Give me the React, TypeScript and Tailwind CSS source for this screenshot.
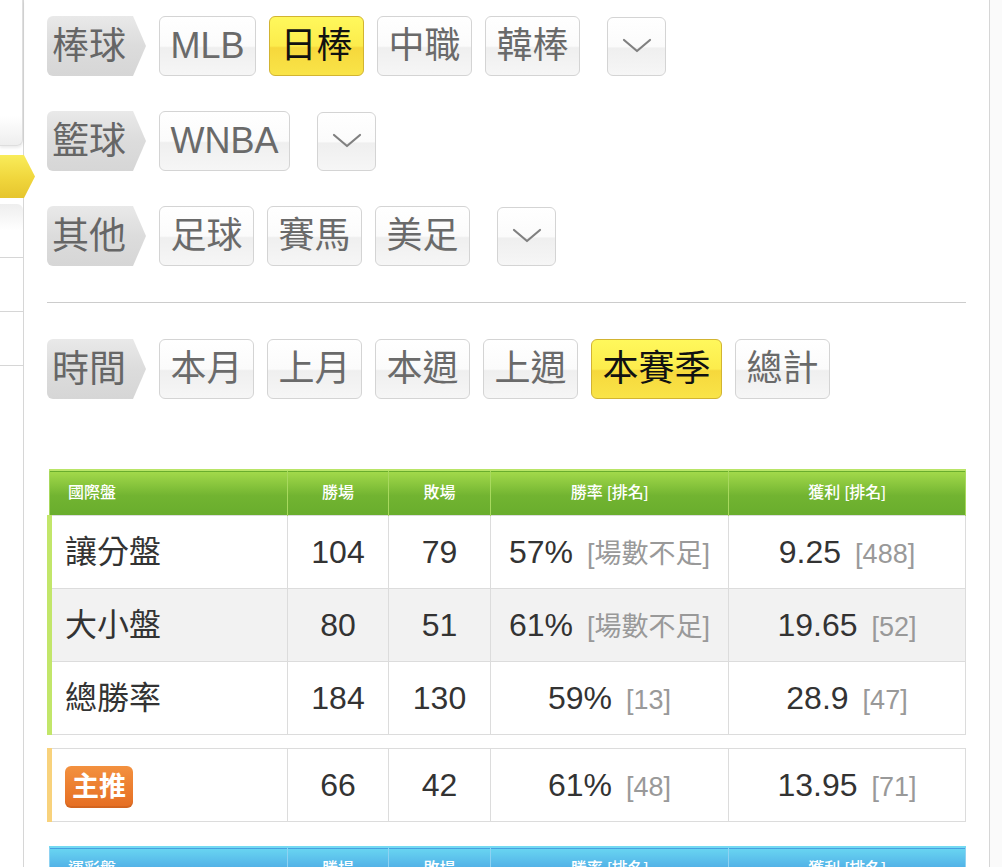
import React from "react";

const FONT = { fontFamily: '"Liberation Sans", "Noto Sans CJK TC", sans-serif' };

function Tag({ label }: { label: string }) {
  return (
    <div className="flex h-[60px] w-[99px] shrink-0 items-center rounded-l-md bg-[linear-gradient(to_bottom,#e9e9e9,#dcdcdc_50%,#d6d6d6)] pl-[5px] text-[37px] leading-none text-[#666] [clip-path:polygon(0_0,calc(100%_-_13px)_0,100%_50%,calc(100%_-_13px)_100%,0_100%)]">
      {label}
    </div>
  );
}

function Btn({ label, active }: { label: string; active?: boolean }) {
  return (
    <button
      className={`flex h-[60px] shrink-0 items-center rounded-md border px-[10.5px] text-[36px] leading-none ${
        active
          ? "border-[#d2b431] bg-[linear-gradient(to_bottom,#fff85c_0%,#fcec4c_50%,#f6d83c_53%,#f9e448_100%)] text-[#111]"
          : "border-[#d4d4d4] bg-[linear-gradient(to_bottom,#ffffff_0%,#fbfbfb_50%,#efefef_53%,#f6f6f6_100%)] text-[#6a6a6a]"
      }`}
    >
      {label}
    </button>
  );
}

function Drop() {
  return (
    <button className="ml-[14px] flex h-[59px] w-[59px] shrink-0 items-center justify-center rounded-md border border-[#d4d4d4] bg-[linear-gradient(to_bottom,#ffffff_0%,#fbfbfb_50%,#efefef_53%,#f6f6f6_100%)]">
      <svg width="30" height="16" viewBox="0 0 30 16" fill="none">
        <polyline points="2,2 15,13 28,2" stroke="#808080" strokeWidth="2.2" strokeLinecap="round" strokeLinejoin="round" />
      </svg>
    </button>
  );
}

function Row({ label, items, active, drop }: { label: string; items: string[]; active?: string; drop?: boolean }) {
  return (
    <div className="flex items-center gap-[13px]">
      <Tag label={label} />
      {items.map((it) => (
        <Btn key={it} label={it} active={it === active} />
      ))}
      {drop && <Drop />}
    </div>
  );
}

type Stat = { name: React.ReactNode; win: string; lose: string; rate: string; rateRank: string; profit: string; profitRank: string };

function Cells({ s, accent, bg }: { s: Stat; accent: string; bg: string }) {
  return (
    <tr className={`h-[73px] ${bg}`}>
      <td className={`border border-[#dcdcdc] ${accent} pl-[13px] text-[32px] text-[#333]`}>{s.name}</td>
      <td className="border border-[#dcdcdc] text-center text-[32px] text-[#333]">{s.win}</td>
      <td className="border border-[#dcdcdc] text-center text-[32px] text-[#333]">{s.lose}</td>
      <td className="border border-[#dcdcdc] text-center text-[32px] text-[#333]">
        {s.rate}
        <span className="ml-[14px] text-[27px] text-[#999]">[{s.rateRank}]</span>
      </td>
      <td className="border border-[#dcdcdc] text-center text-[32px] text-[#333]">
        {s.profit}
        <span className="ml-[14px] text-[27px] text-[#999]">[{s.profitRank}]</span>
      </td>
    </tr>
  );
}

function Cols() {
  return (
    <colgroup>
      <col className="w-[238px]" />
      <col className="w-[101px]" />
      <col className="w-[102px]" />
      <col className="w-[238px]" />
      <col />
    </colgroup>
  );
}

function Head({ title, blue }: { title: string; blue?: boolean }) {
  const th = blue
    ? "border-x border-[#8ed2f2] text-center font-medium"
    : "border-x border-[#a8d95e] text-center font-medium";
  return (
    <thead>
      <tr
        className={`h-[45px] text-[16px] text-white ${
          blue
            ? "border-t-2 border-[#74daf2] bg-[linear-gradient(to_bottom,#68d4f1,#4ca8e4_55%,#479fe0)]"
            : "border-t-2 border-[#b9e567] bg-[linear-gradient(to_bottom,#a2d94a,#72b431_55%,#69ad2d)]"
        }`}
      >
        <th className={`${th} pl-[18px] text-left`}>{title}</th>
        <th className={th}>勝場</th>
        <th className={th}>敗場</th>
        <th className={th}>勝率 [排名]</th>
        <th className={th}>獲利 [排名]</th>
      </tr>
    </thead>
  );
}

const intl: Stat[] = [
  { name: "讓分盤", win: "104", lose: "79", rate: "57%", rateRank: "場數不足", profit: "9.25", profitRank: "488" },
  { name: "大小盤", win: "80", lose: "51", rate: "61%", rateRank: "場數不足", profit: "19.65", profitRank: "52" },
  { name: "總勝率", win: "184", lose: "130", rate: "59%", rateRank: "13", profit: "28.9", profitRank: "47" },
];

const lottery: Stat[] = [
  { name: "讓分盤", win: "98", lose: "84", rate: "54%", rateRank: "場數不足", profit: "6.12", profitRank: "301" },
  { name: "大小盤", win: "77", lose: "58", rate: "57%", rateRank: "場數不足", profit: "11.4", profitRank: "88" },
];

export default function App() {
  const pick: Stat = {
    name: (
      <span className="inline-flex h-[42px] w-[68px] items-center justify-center rounded-md bg-[linear-gradient(to_bottom,#f3913f,#e56d22)] text-[27px] font-bold text-white shadow-[inset_0_-2px_0_rgba(0,0,0,0.08)]">
        主推
      </span>
    ),
    win: "66",
    lose: "42",
    rate: "61%",
    rateRank: "48",
    profit: "13.95",
    profitRank: "71",
  };

  return (
    <div className="flex min-h-screen bg-white" style={FONT}>
      {/* side nav */}
      <div className="relative z-10 w-[24px] shrink-0 border-r border-[#d6d6d6] bg-white">
        <div className="h-[146px] rounded-br-md border-r border-b border-[#dedede] bg-[linear-gradient(to_bottom,#ffffff_0%,#ffffff_80%,#eeeeee_100%)] shadow-[0_2px_3px_rgba(0,0,0,0.08)]" />
        <div className="mt-[9px] h-[43px] w-[35px] bg-[linear-gradient(to_bottom,#f9ec5a,#f0d63c_55%,#e6c52e)] [clip-path:polygon(0_0,24px_0,100%_50%,24px_100%,0_100%)]" />
        <div className="mt-[6px] h-[54px] rounded-tr-md border-b border-[#d6d6d6] bg-[linear-gradient(to_bottom,#eeeeee_0%,#ffffff_50%)]" />
        <div className="h-[54px] border-b border-[#d6d6d6]" />
        <div className="h-[54px] border-b border-[#d6d6d6]" />
      </div>

      {/* main */}
      <div className="flex-1 px-[23px] pt-[16px]">
        <Row label="棒球" items={["MLB", "日棒", "中職", "韓棒"]} active="日棒" drop />
        <div className="mt-[35px]">
          <Row label="籃球" items={["WNBA"]} drop />
        </div>
        <div className="mt-[35px]">
          <Row label="其他" items={["足球", "賽馬", "美足"]} drop />
        </div>
        <div className="mt-[36px] h-px bg-[#cccccc]" />
        <div className="mt-[36px]">
          <Row label="時間" items={["本月", "上月", "本週", "上週", "本賽季", "總計"]} active="本賽季" />
        </div>

        <table className="mt-[70px] w-full table-fixed border-collapse">
          <Cols />
          <Head title="國際盤" />
          <tbody>
            {intl.map((s, i) => (
              <Cells key={i} s={s} accent="border-l-[5px] border-l-[#c2e66a]" bg={i === 1 ? "bg-[#f2f2f2]" : "bg-white"} />
            ))}
          </tbody>
        </table>

        <table className="mt-[13px] w-full table-fixed border-collapse">
          <Cols />
          <tbody>
            <Cells s={pick} accent="border-l-[5px] border-l-[#f8d27c]" bg="bg-white" />
          </tbody>
        </table>

        <table className="mt-[24px] mb-10 w-full table-fixed border-collapse">
          <Cols />
          <Head title="運彩盤" blue />
          <tbody>
            {lottery.map((s, i) => (
              <Cells key={i} s={s} accent="border-l-[5px] border-l-[#6cc6ee]" bg={i === 1 ? "bg-[#f2f2f2]" : "bg-white"} />
            ))}
          </tbody>
        </table>
      </div>

      {/* right edge */}
      <div className="w-[13px] shrink-0 border-l border-[#d6d6d6] bg-[#fafafa]" />
    </div>
  );
}
